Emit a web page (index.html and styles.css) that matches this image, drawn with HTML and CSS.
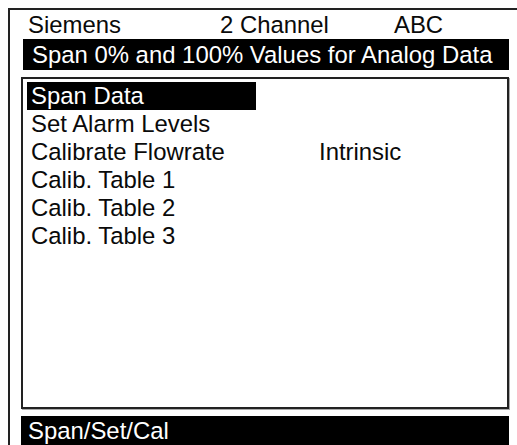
FILE: index.html
```html
<!DOCTYPE html>
<html>
<head>
<meta charset="utf-8">
<link rel="stylesheet" href="styles.css">
</head>
<body>
<div class="frame">
  <div class="header">
    <span>Siemens</span>
    <span>2 Channel</span>
    <span>ABC</span>
  </div>
  <div class="title">Span 0% and 100% Values for Analog Data</div>
  <div class="panel">
    <div class="row"><span class="label selected">Span Data</span><span></span></div>
    <div class="row"><span class="label">Set Alarm Levels</span><span></span></div>
    <div class="row"><span class="label">Calibrate Flowrate</span><span class="value">Intrinsic</span></div>
    <div class="row"><span class="label">Calib. Table 1</span><span></span></div>
    <div class="row"><span class="label">Calib. Table 2</span><span></span></div>
    <div class="row"><span class="label">Calib. Table 3</span><span></span></div>
  </div>
  <div class="status">Span/Set/Cal</div>
</div>
</body>
</html>
```
FILE: styles.css
```css
html, body {
  margin: 0;
  padding: 0;
  background: #fff;
  overflow: hidden;
}
body {
  font-family: "Liberation Sans", Arial, sans-serif;
  font-size: 23.9px;
  color: #0a0a0a;
  width: 517px;
  height: 445px;
}
.frame {
  margin: 8px 0 0 8px;
  border-top: 2px solid #222;
  border-left: 2px solid #222;
  height: 437px;
  box-sizing: border-box;
  padding-left: 11px;
}
.header {
  display: grid;
  grid-template-columns: 192px 174px auto;
  padding: 1px 0 0 7px;
  height: 29px;
  line-height: 28px;
  box-sizing: border-box;
}
.title {
  margin-left: 2px;
  width: 486px;
  height: 31px;
  line-height: 31px;
  background: #000;
  color: #fff;
  padding-left: 9px;
  box-sizing: border-box;
  white-space: nowrap;
}
.panel {
  margin-top: 7px;
  width: 488px;
  height: 332px;
  box-sizing: border-box;
  border: 2px solid #222;
  box-shadow: 1px 1px 0 #aaa;
  padding: 3px 0 0 4px;
}
.row {
  display: grid;
  grid-template-columns: 292px auto;
  height: 28px;
  line-height: 28px;
}
.label {
  justify-self: start;
  padding-left: 4px;
  white-space: nowrap;
}
.label.selected {
  background: #000;
  color: #fff;
  width: 229px;
  box-sizing: border-box;
  padding-left: 4px;
}
.status {
  margin-top: 7px;
  width: 488px;
  height: 40px;
  background: #000;
  color: #fff;
  line-height: 29px;
  padding-left: 7px;
  box-sizing: border-box;
}
```
